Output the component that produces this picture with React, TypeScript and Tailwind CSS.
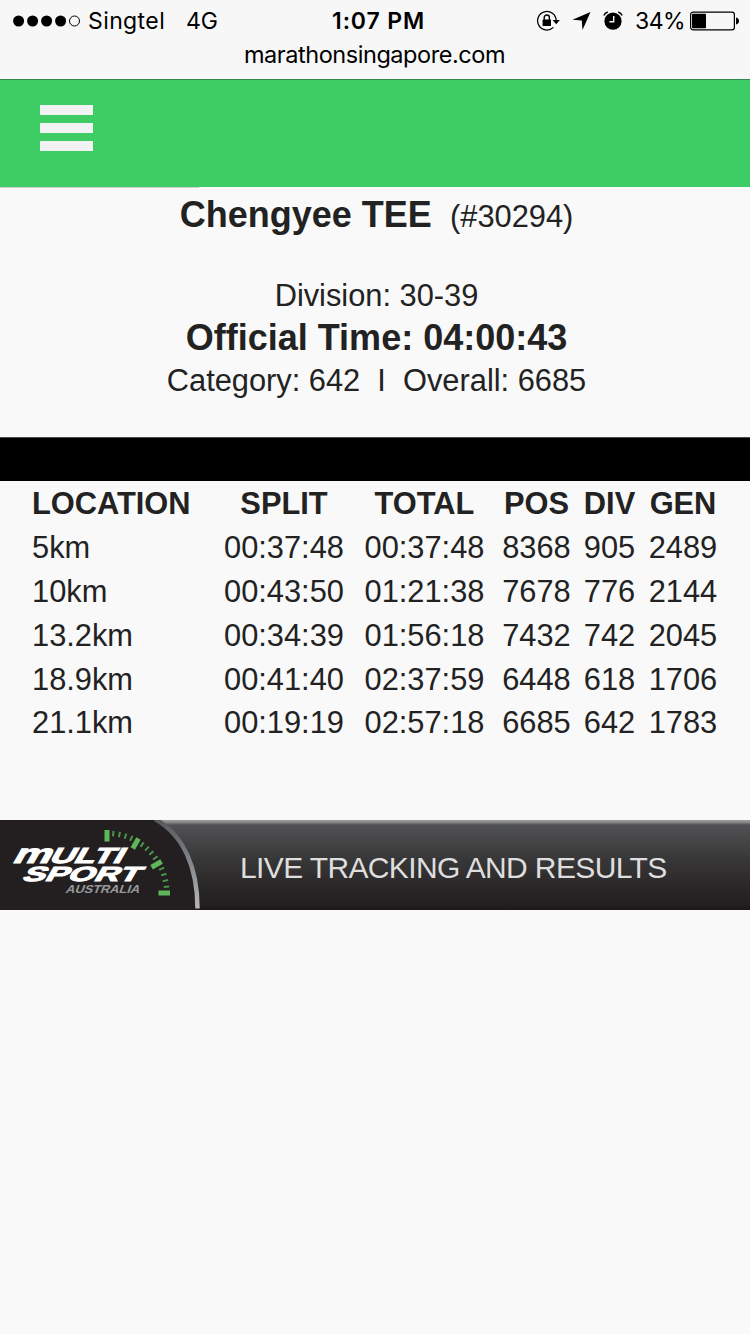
import React from "react";

interface Split {
  location: string;
  split: string;
  total: string;
  pos: number;
  div: number;
  gen: number;
}

const splits: Split[] = [
  { location: "5km", split: "00:37:48", total: "00:37:48", pos: 8368, div: 905, gen: 2489 },
  { location: "10km", split: "00:43:50", total: "01:21:38", pos: 7678, div: 776, gen: 2144 },
  { location: "13.2km", split: "00:34:39", total: "01:56:18", pos: 7432, div: 742, gen: 2045 },
  { location: "18.9km", split: "00:41:40", total: "02:37:59", pos: 6448, div: 618, gen: 1706 },
  { location: "21.1km", split: "00:19:19", total: "02:57:18", pos: 6685, div: 642, gen: 1783 },
];

const SignalDots = () => (
  <svg width="68" height="12" viewBox="0 0 68 12">
    {[5.6, 19.6, 33.6, 47.6].map((cx) => (
      <circle key={cx} cx={cx} cy="6" r="5.5" />
    ))}
    <circle cx="61.5" cy="6" r="5" fill="none" stroke="#000" />
  </svg>
);

const RotationLockIcon = () => (
  <svg width="25" height="22" viewBox="0 0 25 22">
    <path d="M20.2 10.5A9.3 9.3 0 1 0 17.4 17.4" fill="none" stroke="#000" strokeWidth="1.3" />
    <path d="M16.6 10h7.2l-3.5 4.2z" />
    <rect x="6.6" y="9.6" width="8.4" height="6.4" rx="0.5" />
    <path d="M8.2 10V7.6a2.6 2.6 0 0 1 5.2 0V10" fill="none" stroke="#000" strokeWidth="1.4" />
  </svg>
);

const LocationIcon = () => (
  <svg width="19" height="18" viewBox="0 0 19 18">
    <path d="M18.5 0L10.5 18L9.8 8.4L0.5 7.7z" />
  </svg>
);

const AlarmIcon = () => (
  <svg width="20" height="19" viewBox="0 0 20 19">
    <circle cx="10" cy="10.2" r="8.6" />
    <path d="M0.8 4.6A6 6 0 0 1 4.8 1M19.2 4.6A6 6 0 0 0 15.2 1" fill="none" stroke="#000" strokeWidth="1.4" />
    <path d="M10.7 5v5.8H6.4" fill="none" stroke="#f7f7f7" strokeWidth="1.4" />
  </svg>
);

const BatteryIcon = () => (
  <svg width="50" height="20" viewBox="0 0 50 20">
    <rect x="0.6" y="1.1" width="43.8" height="17.8" rx="2.6" fill="none" stroke="#000" strokeWidth="1.2" />
    <rect x="2" y="2.7" width="14" height="14.6" rx="1" />
    <path d="M46 6.5c4 .6 4 6.4 0 7z" />
  </svg>
);

const StatusBar = () => (
  <div className="h-20 border-b border-[#338a4f] bg-[#f7f7f7] font-['Inter',sans-serif] text-black">
    <div className="flex h-[41px] items-center">
      <div className="flex w-[332px] items-center pl-[13px]">
        <SignalDots />
        <span className="ml-[7px] w-[98px] pt-px text-[23px] tracking-[0.4px]">Singtel</span>
        <span className="pt-px text-[23px]">4G</span>
      </div>
      <div className="w-[204px] pt-px text-[23px] font-semibold tracking-[0.9px] whitespace-nowrap">1:07 PM</div>
      <RotationLockIcon />
      <div className="ml-[11px]">
        <LocationIcon />
      </div>
      <div className="ml-[12px]">
        <AlarmIcon />
      </div>
      <span className="ml-[12px] w-[55px] pt-px text-[23px] tracking-[-0.5px] whitespace-nowrap">34%</span>
      <BatteryIcon />
    </div>
    <div className="-mt-px pr-px text-center text-[23.5px] leading-[30px] tracking-[-0.45px]">marathonsingapore.com</div>
  </div>
);

const NavBar = () => (
  <div className="h-[107px] bg-[#3ecd64] pt-[25px] pl-10">
    <div className="flex w-[52.5px] flex-col gap-2">
      <div className="h-[10px] bg-[#f2f2f2]" />
      <div className="h-[10px] bg-[#f2f2f2]" />
      <div className="h-[10px] bg-[#f2f2f2]" />
    </div>
  </div>
);

const Summary = () => (
  <div className="h-[250px] text-center whitespace-pre">
    <div className="h-px w-[199px] bg-[#cfcfcf]" />
    <div className="h-[86px] pt-[5px] pl-[3px] text-[31px] leading-[44px]">
      <b className="text-[36px]">Chengyee TEE</b>
      {"  "}
      <span className="ml-px text-[30.8px]">(#30294)</span>
    </div>
    <div className="pl-[3px] text-[30.8px] leading-[44px]">Division: 30-39</div>
    <div className="pl-[3px] text-[36px] leading-[40px] font-bold">Official Time: 04:00:43</div>
    <div className="pl-[3px] text-[30.8px] leading-[46px]">{"Category: 642  I  Overall: 6685"}</div>
  </div>
);

const rowClass =
  "grid h-[43.8px] grid-cols-[181.5px_141px_140px_84px_62px_85px] items-center pl-[32px] text-center";

const SplitTable = () => (
  <div className="h-[339px] pt-[1.5px] text-[30.8px]">
    <div className={`${rowClass} leading-[42px] font-bold`}>
      <div className="-mt-[1.5px] text-left">LOCATION</div>
      <div className="-mt-[1.5px]">SPLIT</div>
      <div className="-mt-[1.5px]">TOTAL</div>
      <div className="-mt-[1.5px]">POS</div>
      <div className="-mt-[1.5px]">DIV</div>
      <div className="-mt-[1.5px]">GEN</div>
    </div>
    {splits.map((row) => (
      <div key={row.location} className={`${rowClass} leading-[43.8px]`}>
        <div className="text-left">{row.location}</div>
        <div>{row.split}</div>
        <div>{row.total}</div>
        <div>{row.pos}</div>
        <div>{row.div}</div>
        <div>{row.gen}</div>
      </div>
    ))}
  </div>
);

// Speedometer style ticks, every fifth one is a long one
const ticks = Array.from({ length: 16 }, (_, i) => i);

const MultiSportLogo = () => (
  <svg width="208" height="90" viewBox="0 0 208 90">
    <defs>
      <linearGradient id="rim" x1="0" y1="0" x2="0" y2="1">
        <stop offset="0" stopColor="#55585a" />
        <stop offset="0.5" stopColor="#85888c" />
        <stop offset="1" stopColor="#b4b6ba" />
      </linearGradient>
    </defs>
    <path d="M0 0H157C184 17 197 50 197 90H0z" fill="#231f20" />
    <path d="M155 -1C184 15 197.5 48 197.5 88.5" fill="none" stroke="url(#rim)" strokeWidth="4.5" />
    {ticks.map((i) =>
      i % 5 === 0 ? (
        <rect key={i} x="104.5" y="10" width="5" height="11.5" fill="#5cb85a" transform={`rotate(${i * 6} 107 73)`} />
      ) : (
        <rect key={i} x="106" y="10.5" width="2" height="5.5" fill="#4a9648" transform={`rotate(${i * 6} 107 73)`} />
      )
    )}
    <g fontFamily="Liberation Sans, sans-serif" fontWeight="bold">
      <g fill="#fff" stroke="#fff" strokeWidth="1">
        {/* wide lowercase m set as tall as the capitals next to it */}
        <text transform="translate(11 43) skewX(-30)" fontSize="27" textLength="38" lengthAdjust="spacingAndGlyphs">
          m
        </text>
        <text transform="translate(48 43) skewX(-30)" fontSize="22" textLength="73" lengthAdjust="spacingAndGlyphs">
          ULTI
        </text>
        <text transform="translate(21 61) skewX(-30)" fontSize="20.5" textLength="117" lengthAdjust="spacingAndGlyphs">
          SPORT
        </text>
      </g>
      <text transform="translate(65 73) skewX(-20)" fontSize="11.5" fill="#96999c" textLength="74" lengthAdjust="spacingAndGlyphs">
        AUSTRALIA
      </text>
    </g>
  </svg>
);

const Banner = () => (
  <div className="flex h-[90px] items-center bg-[linear-gradient(to_bottom,#999b9d_0px,#8b8d8f_2px,#505153_5px,#4a4a4c_15px,#393839_38px,#2a2728_66px,#231f20_86px,#1c1819_90px)]">
    <MultiSportLogo />
    <div className="ml-[32px] pt-[5px] text-[30px] tracking-[-0.63px] whitespace-nowrap text-[#dedede]">
      LIVE TRACKING AND RESULTS
    </div>
  </div>
);

const App: React.FC = () => (
  <div className="h-[1334px] w-[750px] overflow-hidden bg-[#f9f9f9] font-['Liberation_Sans',Arial,sans-serif] text-[#222222]">
    <StatusBar />
    <NavBar />
    <Summary />
    <div className="h-[44px] border-t border-[#4a4a4a] bg-black" />
    <SplitTable />
    <Banner />
  </div>
);

export default App;
